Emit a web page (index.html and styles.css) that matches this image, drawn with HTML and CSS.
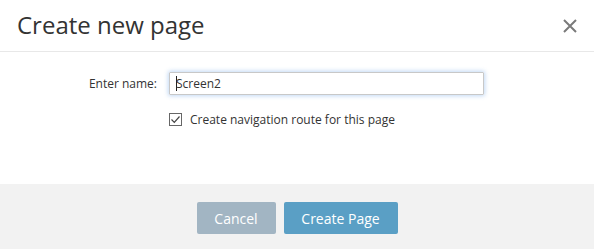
FILE: index.html
```html
<!DOCTYPE html>
<html>
<head>
<meta charset="utf-8">
<link rel="stylesheet" href="styles.css">
</head>
<body>
<div class="dialog">
  <div class="header">
    <h1 class="title">Create new page</h1>
    <button class="close" aria-label="Close">
      <svg width="14" height="14" viewBox="0 0 14 14"><path d="M1 1 L13 13 M13 1 L1 13" stroke="#7a7a7a" stroke-width="2" fill="none"/></svg>
    </button>
  </div>
  <div class="content">
    <div class="row">
      <label class="label" for="name">Enter name:</label>
      <div class="input"><span class="caret"></span>Screen2</div>
    </div>
    <div class="row check-row">
      <span class="label"></span>
      <label class="check">
        <span class="box"><svg width="11" height="11" viewBox="0 0 11 11"><path d="M1.5 5.5 L4.3 8.3 L9.5 2.5" stroke="#444" stroke-width="1.2" fill="none"/></svg></span>
        <span>Create navigation route for this page</span>
      </label>
    </div>
  </div>
  <div class="footer">
    <button class="btn btn-cancel">Cancel</button>
    <button class="btn btn-primary">Create Page</button>
  </div>
</div>
</body>
</html>
```
FILE: styles.css
```css
html, body {
  margin: 0;
  padding: 0;
  background: #fff;
}
body {
  font-family: "Open Sans", "Segoe UI", sans-serif;
  color: #333;
  width: 594px;
  height: 249px;
  overflow: hidden;
}
.dialog {
  display: flex;
  flex-direction: column;
  height: 249px;
}
.header {
  height: 51px;
  border-bottom: 1px solid #e8e8e8;
  display: flex;
  align-items: center;
  justify-content: space-between;
  padding: 0 17px 0 17px;
}
.title {
  margin: 0;
  font-size: 24px;
  font-weight: 400;
  color: #333;
  line-height: 1;
  position: relative;
  top: -1px;
}
.close {
  border: 0;
  background: none;
  padding: 0;
  width: 14px;
  height: 14px;
  display: flex;
  cursor: pointer;
}
.content {
  flex: 1;
  padding-top: 20px;
}
.row {
  display: flex;
  align-items: center;
}
.label {
  width: 157px;
  text-align: right;
  font-size: 12px;
  color: #333;
  margin-right: 12px;
  flex: none;
}
.input {
  width: 315px;
  height: 23px;
  box-sizing: border-box;
  border: 1px solid #c8c8c8;
  box-shadow: 0 0 4px 1px rgba(120, 170, 230, 0.45);
  padding: 0 6px;
  font-size: 12px;
  color: #333;
  border-radius: 1px;
  display: flex;
  align-items: center;
}
.caret {
  width: 1px;
  height: 15px;
  background: #222;
  margin-right: -1px;
}
.check-row {
  margin-top: 16px;
}
.check {
  display: flex;
  align-items: center;
  font-size: 12px;
  color: #333;
}
.box {
  width: 13px;
  height: 13px;
  box-sizing: border-box;
  border: 1px solid #666;
  display: flex;
  align-items: center;
  justify-content: center;
  margin-right: 8px;
}
.footer {
  height: 65px;
  background: #f2f2f2;
  display: flex;
  justify-content: center;
  align-items: center;
  gap: 8px;
}
.btn {
  height: 32px;
  border: 0;
  border-radius: 2px;
  color: #fff;
  font-family: inherit;
  font-size: 14px;
  padding: 0;
  margin-top: 3px;
}
.btn-cancel {
  width: 79px;
  background: #a2b5c3;
}
.btn-primary {
  width: 114px;
  background: #5a9fc5;
}
```
